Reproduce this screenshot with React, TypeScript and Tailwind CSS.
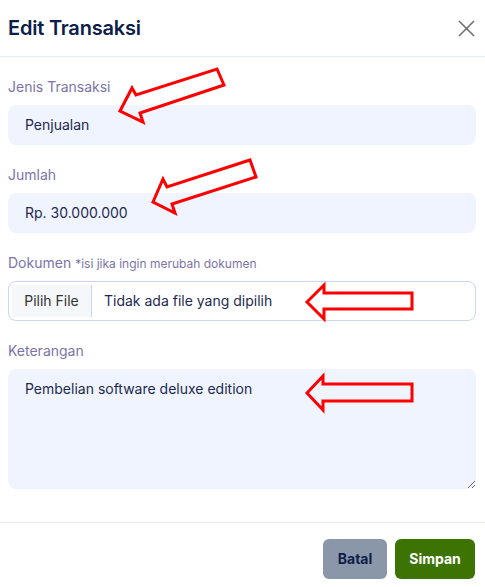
import React from 'react';

const font = { fontFamily: 'Inter, "Noto Sans", sans-serif' };

function Field({ label, note, children }: { label: string; note?: string; children: React.ReactNode }) {
  return (
    <div className="flex flex-col gap-2">
      <label className="text-sm leading-5 text-[#7b74a8]">
        {label}
        {note && <span className="ml-1 text-xs">{note}</span>}
      </label>
      {children}
    </div>
  );
}

export default function App() {
  return (
    <div className="relative w-[485px] h-[587px] bg-white text-[#1e2a50]" style={font}>
      {/* Header */}
      <div className="h-[57px] flex items-center justify-between pl-2 pr-[9px] border-b border-[#e3ebf7]">
        <h2 className="text-xl font-semibold text-[#0c1d4a] tracking-[-0.2px]">Edit Transaksi</h2>
        <button className="w-5 h-5 flex items-center justify-center text-[#6f6f6f]">
          <svg width="17" height="17" viewBox="0 0 17 17" fill="none" stroke="currentColor" strokeWidth="1.6">
            <line x1="1" y1="1" x2="16" y2="16" />
            <line x1="16" y1="1" x2="1" y2="16" />
          </svg>
        </button>
      </div>

      {/* Body */}
      <div className="flex flex-col gap-5 px-2 pt-5 pr-[9px]">
        <Field label="Jenis Transaksi">
          <div className="h-10 flex items-center px-[17px] rounded-lg bg-[#eff4fe] text-sm">Penjualan</div>
        </Field>
        <Field label="Jumlah">
          <div className="h-10 flex items-center px-[17px] rounded-lg bg-[#eff4fe] text-sm">Rp. 30.000.000</div>
        </Field>
        <Field label="Dokumen" note="*isi jika ingin merubah dokumen">
          <div className="h-10 flex items-stretch rounded-lg border border-[#c9d7f1] bg-white p-[3px] text-sm">
            <div className="w-[80px] flex items-center justify-center bg-[#f5f7fb] border-r border-[#c9d7f1] text-[#333]">
              Pilih File
            </div>
            <div className="flex items-center pl-3">Tidak ada file yang dipilih</div>
          </div>
        </Field>
        <Field label="Keterangan">
          <textarea
            className="h-[120px] rounded-lg bg-[#eff4fe] px-[17px] pt-[10px] text-sm leading-5 text-[#1e2a50] outline-none"
            defaultValue="Pembelian software deluxe edition"
          />
        </Field>
      </div>

      {/* Footer */}
      <div className="mt-[33px] border-t border-[#e3ebf7] flex justify-end gap-2 pt-4 pr-[10px]">
        <button className="h-10 w-16 rounded-md bg-[#8a97a9] text-sm font-bold text-[#0f1e4a]">Batal</button>
        <button className="h-10 w-20 rounded-md bg-[#3c7303] text-sm font-bold text-white">Simpan</button>
      </div>

      {/* Annotation arrows */}
      <svg className="absolute inset-0 pointer-events-none" width="485" height="587" fill="none" stroke="#ff0000" strokeWidth="3" strokeLinejoin="miter">
        <polygon points="120,111 132,88 136,95 217,69 224,85 140,113 143,122" />
        <polygon points="153,202 163,179 167,187 250,160 256,177 172,204 175,213" />
        <polygon points="307,302 324,285 324,293 412,293 412,309 324,309 324,319" />
        <polygon points="307,393 323,376 323,384 412,384 412,401 323,401 323,410" />
      </svg>
    </div>
  );
}
